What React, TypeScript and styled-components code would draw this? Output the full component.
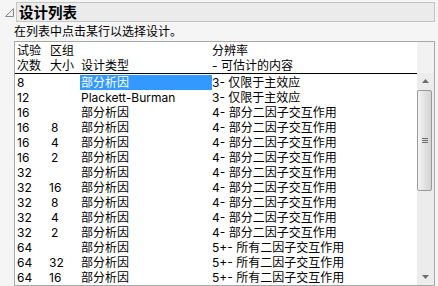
import React, { FC } from 'react'
import styled, { createGlobalStyle } from 'styled-components'

const GlobalStyle = createGlobalStyle`
  html, body {
    margin: 0;
    padding: 0;
    background: #f5f5f5;
  }
  body {
    font-family: Inter, "Noto Sans CJK SC", sans-serif;
    font-size: 12px;
    color: #000;
  }
`

const Page = styled.div`
  width: 438px;
  height: 286px;
  padding: 2px 3px 0 4px;
  box-sizing: border-box;
`

const TitleRow = styled.div`
  display: flex;
  align-items: flex-start;
`

const Disclosure = styled.svg`
  width: 12px;
  height: 16px;
  flex: none;
`

const TitleBox = styled.div`
  flex: 1;
  height: 20px;
  box-sizing: border-box;
  border: 1px solid #c4c4c4;
  background: #ebebeb;
  padding-left: 2px;
  font-family: "Noto Sans CJK SC", sans-serif;
  font-weight: bold;
  font-size: 14.5px;
  line-height: 18px;
`

const Hint = styled.div`
  margin: 2px 0 0 10px;
  height: 15px;
  line-height: 15px;
`

const ListBox = styled.div`
  margin: 2px 0 0 10px;
  width: 421px;
  height: 245px;
  box-sizing: border-box;
  border: 1px solid #a8a8a8;
  background: #fff;
  display: flex;
  overflow: hidden;
`

const Table = styled.div`
  flex: 1;
  display: flex;
  flex-direction: column;
`

const Grid = styled.div`
  display: grid;
  grid-template-columns: 32px 31px 132px 1fr;
  padding-left: 2px;
`

const Head = styled(Grid)`
  padding-top: 1px;
  border-bottom: 1px solid #000;
`

const HeadCell = styled.div<{ $pad?: number }>`
  line-height: 15px;
  padding-left: ${(p) => p.$pad ?? 0}px;
  white-space: pre;
`

const Row = styled(Grid)`
  height: 15px;
  line-height: 15px;
`

const Cell = styled.div<{ $selected?: boolean; $pad?: number }>`
  white-space: nowrap;
  padding-left: ${(p) => p.$pad ?? 0}px;
  background: ${(p) => (p.$selected ? '#3399ff' : 'transparent')};
  color: ${(p) => (p.$selected ? '#fff' : '#000')};
`

const Body = styled.div`
  padding-top: 1px;
`

const ScrollBar = styled.div`
  width: 17px;
  flex: none;
  background: #ececec;
  display: flex;
  flex-direction: column;
`

const ScrollHeadSpace = styled.div`
  height: 31px;
  background: #f2f2f2;
`

const ArrowButton = styled.div`
  height: 16px;
  display: flex;
  align-items: center;
  justify-content: center;
`

const Track = styled.div`
  flex: 1;
  position: relative;
`

const Thumb = styled.div`
  position: absolute;
  left: 0;
  top: 1px;
  width: 15px;
  height: 101px;
  box-sizing: border-box;
  border: 1px solid #9a9a9a;
  border-radius: 2px;
  background: linear-gradient(to right, #f4f4f4, #e2e2e2 50%, #d4d4d4);
  display: flex;
  align-items: center;
  justify-content: center;
`

const Grip = styled.div`
  width: 6px;
  height: 5px;
  background: repeating-linear-gradient(to bottom, #6a6a6a 0 1px, transparent 1px 2px);
`

type Design = { runs: string; block: string; type: string; res: string }

const designs: Design[] = [
  { runs: '8', block: '', type: '部分析因', res: '3- 仅限于主效应' },
  { runs: '12', block: '', type: 'Plackett-Burman', res: '3- 仅限于主效应' },
  { runs: '16', block: '', type: '部分析因', res: '4- 部分二因子交互作用' },
  { runs: '16', block: '8', type: '部分析因', res: '4- 部分二因子交互作用' },
  { runs: '16', block: '4', type: '部分析因', res: '4- 部分二因子交互作用' },
  { runs: '16', block: '2', type: '部分析因', res: '4- 部分二因子交互作用' },
  { runs: '32', block: '', type: '部分析因', res: '4- 部分二因子交互作用' },
  { runs: '32', block: '16', type: '部分析因', res: '4- 部分二因子交互作用' },
  { runs: '32', block: '8', type: '部分析因', res: '4- 部分二因子交互作用' },
  { runs: '32', block: '4', type: '部分析因', res: '4- 部分二因子交互作用' },
  { runs: '32', block: '2', type: '部分析因', res: '4- 部分二因子交互作用' },
  { runs: '64', block: '', type: '部分析因', res: '5+- 所有二因子交互作用' },
  { runs: '64', block: '32', type: '部分析因', res: '5+- 所有二因子交互作用' },
  { runs: '64', block: '16', type: '部分析因', res: '5+- 所有二因子交互作用' },
]

const Arrow: FC<{ up?: boolean }> = ({ up }) => (
  <svg width="7" height="4" viewBox="0 0 7 4">
    <polygon points={up ? '0,4 7,4 3.5,0' : '0,0 7,0 3.5,4'} fill="#6e6e6e" />
  </svg>
)

export default function App() {
  return (
    <Page>
      <GlobalStyle />
      <TitleRow>
        <Disclosure viewBox="0 0 12 16">
          <polygon points="1.5,14.5 9.5,14.5 9.5,6.5" fill="#f2f2f2" stroke="#8a8a8a" />
        </Disclosure>
        <TitleBox>设计列表</TitleBox>
      </TitleRow>
      <Hint>在列表中点击某行以选择设计。</Hint>
      <ListBox>
        <Table>
          <Head>
            <HeadCell>{'试验\n次数'}</HeadCell>
            <HeadCell $pad={1}>{'区组\n大小'}</HeadCell>
            <HeadCell $pad={1}>{'\n设计类型'}</HeadCell>
            <HeadCell>{'分辨率\n- 可估计的内容'}</HeadCell>
          </Head>
          <Body>
            {designs.map((d, i) => (
              <Row key={i}>
                <Cell>{d.runs}</Cell>
                <Cell $pad={d.block.length > 1 ? 0 : 2}>{d.block}</Cell>
                <Cell $pad={1} $selected={i === 0}>
                  {d.type}
                </Cell>
                <Cell>{d.res}</Cell>
              </Row>
            ))}
          </Body>
        </Table>
        <ScrollBar>
          <ScrollHeadSpace />
          <ArrowButton>
            <Arrow up />
          </ArrowButton>
          <Track>
            <Thumb>
              <Grip />
            </Thumb>
          </Track>
          <ArrowButton>
            <Arrow />
          </ArrowButton>
        </ScrollBar>
      </ListBox>
    </Page>
  )
}
